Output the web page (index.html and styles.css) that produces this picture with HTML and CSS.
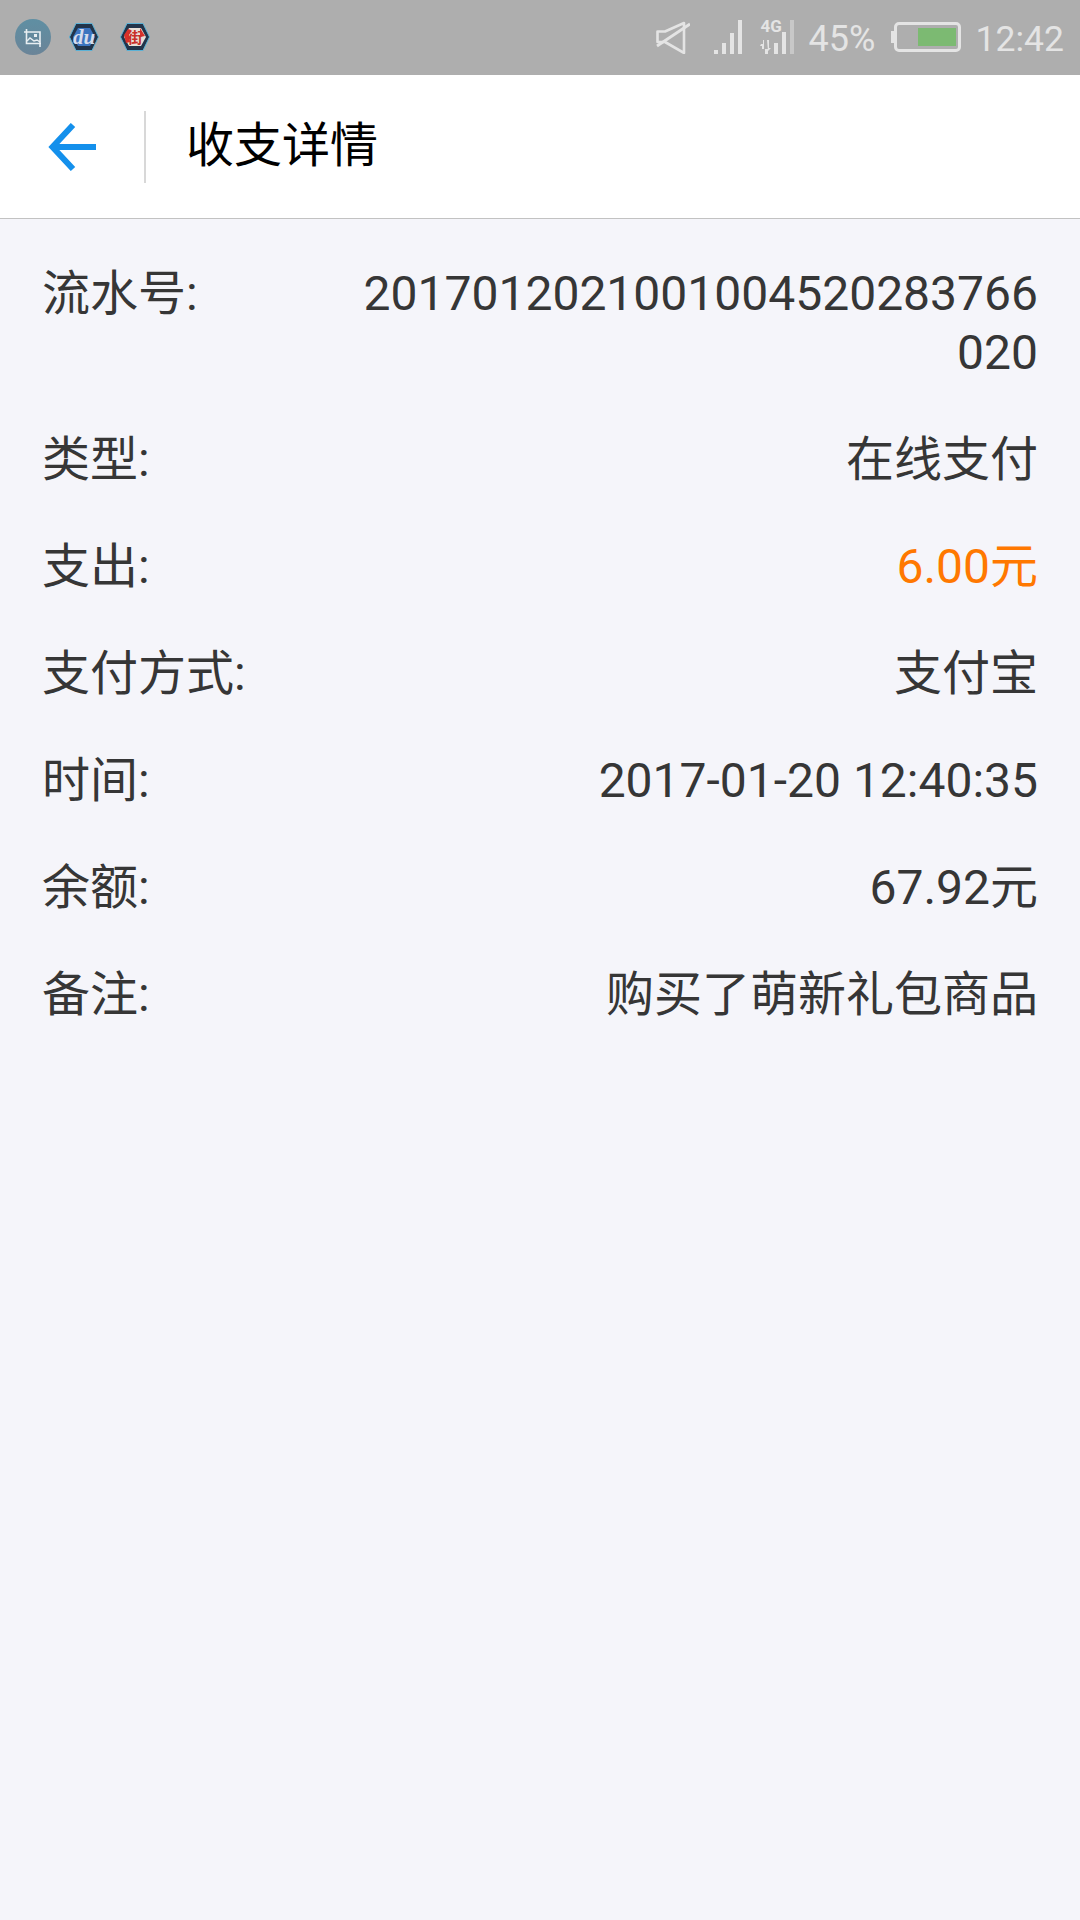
FILE: index.html
```html
<!DOCTYPE html>
<html lang="zh-CN">
<head>
<meta charset="utf-8">
<title>收支详情</title>
<link rel="stylesheet" href="styles.css">
</head>
<body>
<div class="screen">
  <header class="statusbar">
    <div class="notifs">
      <svg class="n-photo" width="36" height="36" viewBox="0 0 36 36">
        <defs><linearGradient id="pg" x1="0" y1="0" x2="0" y2="1"><stop offset="0" stop-color="#5f8fa3"/><stop offset="1" stop-color="#6a8498"/></linearGradient></defs>
        <circle cx="18" cy="18" r="18" fill="url(#pg)"/>
        <path d="M11.5 10V24.5H26M9 13H25V28" fill="none" stroke="#e8eef2" stroke-width="1.6"/>
        <path d="M12 22l3-3 4 3 3-1 3 2" fill="none" stroke="#e8eef2" stroke-width="1.4"/>
        <rect x="19" y="15" width="3" height="3" fill="#e8eef2"/>
      </svg>
      <div class="hex">
        <svg width="30" height="28" viewBox="0 0 30 28"><path d="M7 .5H23L29.5 14L23 27.5H7L.5 14Z" fill="#22344a" stroke="#5cb2d6" stroke-width="1"/><path d="M9 5H21L26 14L21 23H9L4 14Z" fill="#3c74bf"/></svg>
        <span class="hex-label">du</span>
      </div>
      <div class="hex">
        <svg width="30" height="28" viewBox="0 0 30 28"><path d="M7 .5H23L29.5 14L23 27.5H7L.5 14Z" fill="#22344a" stroke="#5cb2d6" stroke-width="1"/><path d="M9 5H21L26 14L21 23H9L4 14Z" fill="#e8e0d8"/><path d="M4 12l4-6 3 1-2 5 1 7-4 1zM20 5l5 8-5 1z" fill="#d8312a"/></svg>
        <span class="hex-label red">街</span>
      </div>
    </div>
    <div class="sys">
      <svg class="i-mute" width="34" height="34" viewBox="0 0 34 34"><path d="M1.500 11.500H9L28 3V33L9 22H1.500Z" fill="none" stroke="#e4e4e4" stroke-width="2.600" stroke-linejoin="round"/><path d="M1 26L34 4" stroke="#e4e4e4" stroke-width="2.800"/></svg>
      <svg class="i-signal" width="28" height="34" viewBox="0 0 28 34"><g fill="#e4e4e4"><rect x="0" y="30" width="4" height="4"/><rect x="8" y="23" width="4" height="11"/><rect x="16" y="13" width="4" height="21"/><rect x="24" y="0" width="4" height="34"/></g></svg>
      <div class="i-net">
        <span class="net-label">4G</span>
        <svg width="34" height="34" viewBox="0 0 34 34"><g fill="#e4e4e4"><rect x="14" y="23" width="4" height="11"/><rect x="22" y="12" width="4" height="22"/><path d="M1 24h2v-4h1v9h-2v-3H0zM7 20l2 0v8h2l-3 3zM5 29h3v5H5z"/></g><rect x="30" y="0" width="4" height="34" fill="#c8c8c8"/></svg>
      </div>
      <span class="pct">45%</span>
      <div class="battery"><i class="batt-tip"></i><div class="batt-body"><div class="batt-fill"></div></div></div>
      <span class="clock">12:42</span>
    </div>
  </header>

  <nav class="appbar">
    <div class="back">
      <svg width="48" height="48" viewBox="0 0 48 48"><path d="M25 2L4.500 24L25 46M4.500 24H48" fill="none" stroke="#1490ec" stroke-width="6"/></svg>
    </div>
    <h1 class="title">收支详情</h1>
  </nav>

  <main class="rows">
    <div class="row"><span class="label">流水号:</span><span class="value long">2017012021001004520283766020</span></div>
    <div class="row"><span class="label">类型:</span><span class="value">在线支付</span></div>
    <div class="row"><span class="label">支出:</span><span class="value orange">6.00元</span></div>
    <div class="row"><span class="label">支付方式:</span><span class="value">支付宝</span></div>
    <div class="row"><span class="label">时间:</span><span class="value">2017-01-20 12:40:35</span></div>
    <div class="row"><span class="label">余额:</span><span class="value">67.92元</span></div>
    <div class="row"><span class="label">备注:</span><span class="value">购买了萌新礼包商品</span></div>
  </main>
</div>
</body>
</html>
```

FILE: styles.css
```css
* { box-sizing: border-box; }
html, body { margin: 0; padding: 0; }
body { font-family: Roboto, "Noto Sans CJK SC", sans-serif; background: #f5f5fa; }
.screen { width: 1080px; height: 1920px; display: flex; flex-direction: column; background: #f5f5fa; overflow: hidden; }

.statusbar { height: 75px; flex: none; background: #aeaeae; display: flex; align-items: center; justify-content: space-between; padding: 0 16px 1px 15px; }
.notifs { display: flex; align-items: center; gap: 21px; }
.hex { position: relative; width: 30px; height: 28px; }
.hex svg { display: block; }
.hex-label { position: absolute; inset: 0; display: flex; align-items: center; justify-content: center; font: italic 700 21px/28px "Liberation Serif", serif; color: #d5dcec; }
.hex-label.red { font: 700 15px/28px "Noto Sans CJK SC", sans-serif; color: #c9302a; }
.n-photo { margin-right: -3px; }
.sys { display: flex; align-items: center; color: #e4e4e4; }
.i-mute { margin-right: 24px; }
.i-signal { margin-right: 18px; }
.i-net { position: relative; width: 34px; height: 34px; margin-right: 15px; }
.i-net svg { display: block; }
.net-label { position: absolute; left: 1px; top: -2px; font: 700 17px/16px Roboto, sans-serif; color: #e4e4e4; }
.pct { font-size: 36px; line-height: 40px; width: 65px; margin: 4px 17px 0 0; white-space: nowrap; }
.battery { display: flex; align-items: center; width: 70px; height: 30px; margin-right: 15px; }
.batt-tip { width: 3px; height: 12px; background: #e4e4e4; flex: none; }
.batt-body { width: 67px; height: 30px; border: 3px solid #e4e4e4; border-radius: 5px; display: flex; justify-content: flex-end; padding: 3px 2px; }
.batt-fill { width: 38px; background: #7cba72; }
.clock { font-size: 35.5px; line-height: 40px; margin-top: 4px; white-space: nowrap; }

.appbar { height: 144px; flex: none; background: #fff; border-bottom: 1px solid #c2c2c2; display: flex; align-items: center; }
.back { width: 146px; height: 72px; flex: none; border-right: 2px solid #d8d8d8; display: flex; align-items: center; justify-content: center; margin-top: 1px; }
.title { margin: 0 0 2px 40px; font-size: 48px; font-weight: 400; line-height: 60px; color: #000; }

.rows { padding: 45px 42px 0 42px; display: flex; flex-direction: column; gap: 48px; }
.row { display: flex; justify-content: space-between; align-items: flex-start; font-size: 48px; line-height: 59px; color: #363636; }
.label { flex: none; }
.value { text-align: right; max-width: 680px; word-break: break-all; }
.orange { color: #ff7800; }
```
